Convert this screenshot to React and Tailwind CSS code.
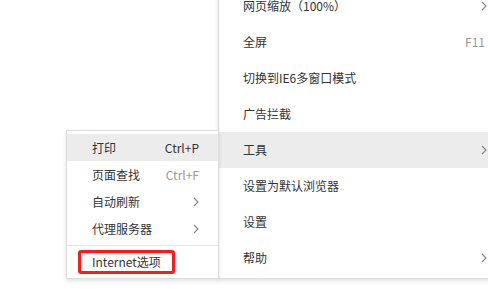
import React from "react";

const Chevron = () => (
  <svg width="6" height="10" viewBox="0 0 6 10" className="shrink-0">
    <polyline points="1,1 5,5 1,9" fill="none" stroke="#8a8a8a" strokeWidth="1.2" />
  </svg>
);

const mainItems = [
  { label: "网页缩放（100%）", chevron: true },
  { label: "全屏", shortcut: "F11" },
  { label: "切换到IE6多窗口模式" },
  { label: "广告拦截" },
  { label: "工具", chevron: true, active: true },
  { label: "设置为默认浏览器" },
  { label: "设置" },
  { label: "帮助", chevron: true },
];

const subItems = [
  { label: "打印", shortcut: "Ctrl+P", active: true, dark: true },
  { label: "页面查找", shortcut: "Ctrl+F" },
  { label: "自动刷新", chevron: true },
  { label: "代理服务器", chevron: true },
];

export default function App() {
  return (
    <div
      className="relative w-[488px] h-[296px] bg-white overflow-hidden text-[12px] text-[#333]"
      style={{ fontFamily: '"Noto Sans CJK SC", "Noto Sans", sans-serif' }}
    >
      {/* main menu */}
      <div className="absolute left-[218px] top-[-12px] w-[290px] bg-white border-l border-b border-[#dcdcdc] shadow-[0_2px_4px_rgba(0,0,0,0.12)] pb-[2px]">
        {mainItems.map((it) => (
          <div
            key={it.label}
            className={`h-[36px] flex items-center pl-[24px] pr-[21px] ${it.active ? "bg-[#ececec]" : ""}`}
          >
            <span className="flex-1">{it.label}</span>
            {it.shortcut && <span className="text-[#999] mr-[2px]">{it.shortcut}</span>}
            {it.chevron && <Chevron />}
          </div>
        ))}
      </div>

      {/* submenu */}
      <div className="absolute left-[66px] top-[130px] w-[153px] bg-white border border-[#dcdcdc] shadow-[0_2px_4px_rgba(0,0,0,0.12)] pt-[3px] pb-[3px]">
        {subItems.map((it) => (
          <div
            key={it.label}
            className={`h-[27px] flex items-center pl-[25px] pr-[19px] ${it.active ? "bg-[#ececec]" : ""}`}
          >
            <span className="flex-1">{it.label}</span>
            {it.shortcut && (
              <span className={it.dark ? "text-[#333]" : "text-[#999]"}>{it.shortcut}</span>
            )}
            {it.chevron && <Chevron />}
          </div>
        ))}
        <div className="my-[3px] h-px bg-[#e6e6e6]" />
        <div className="h-[26px] flex items-center pl-[11px]">
          <span className="h-[24px] flex items-center px-[11px] border-[3px] border-[#ff1a1a] rounded-[3px]">
            Internet选项
          </span>
        </div>
      </div>
    </div>
  );
}
